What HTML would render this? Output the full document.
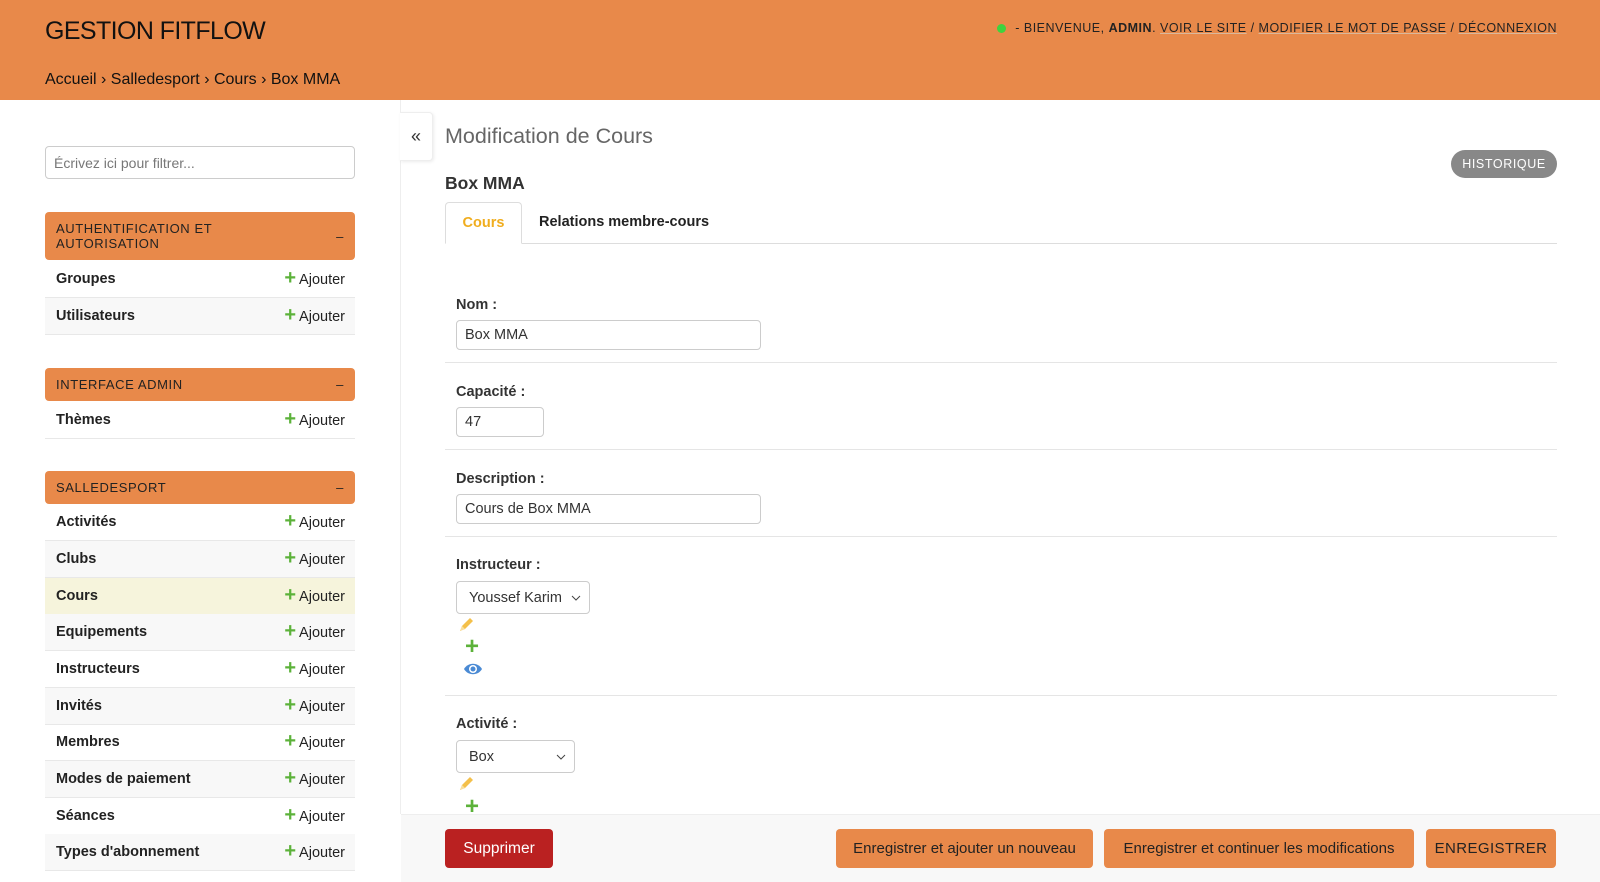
<!DOCTYPE html>
<html><head><meta charset="utf-8"><style>
*{box-sizing:border-box;margin:0;padding:0}
body{width:1600px;height:882px;overflow:hidden;background:#fff;font-family:"Liberation Sans",sans-serif;color:#333;position:relative;font-size:14.5px}
.a{position:absolute}
#hdr{left:0;top:0;width:1600px;height:100px;background:#e8894a}
.side-sec{position:absolute;left:45px;width:310px;background:#e8894a;border-radius:4px;color:#222;font-size:13px;letter-spacing:.6px;padding:0 11px;display:flex;align-items:center;justify-content:space-between}
.row{position:absolute;left:45px;width:310px;height:36.7px;border-bottom:1px solid #e8e8e8;display:flex;align-items:center;justify-content:space-between;padding:0 10px 0 11px;font-weight:bold;font-size:14.5px;color:#222}
.row span{font-weight:normal}
.row b{color:#5cb23a;font-size:20px;margin-right:3px;font-weight:900}
.g{background:#f8f8f8}
.lbl{position:absolute;left:456px;font-weight:bold;font-size:14.5px;color:#333}
.inp{position:absolute;left:456px;border:1px solid #ccc;border-radius:4px;height:30px;padding:0 8px;display:flex;align-items:center;font-size:14.5px;color:#333}
.sel{height:33px;padding-left:12px;justify-content:space-between;padding-right:8px}
.sep{position:absolute;left:445px;width:1112px;height:1px;background:#e5e5e5}
.btn{position:absolute;top:829px;height:39px;border-radius:4px;background:#e8894a;color:#222;font-size:15px;display:flex;align-items:center;justify-content:center}
.pl{position:absolute;left:465px;color:#5cb23a;font-size:24px;font-weight:900;line-height:20px}
</style></head><body>
<div id="hdr" class="a"></div>
<div class="a" style="left:45px;top:17px;font-size:25px;color:#111;letter-spacing:-.6px">GESTION FITFLOW</div>
<div class="a" style="right:43px;top:21px;font-size:12.5px;letter-spacing:.5px;color:#222;display:flex;align-items:center"><span style="display:inline-block;width:9px;height:9px;border-radius:50%;background:#3ed33e;margin-right:9px"></span>- BIENVENUE, <b style="margin:0 0 0 4px">ADMIN</b>.&nbsp;<u style="text-decoration-color:#d9b89c">VOIR LE SITE</u>&nbsp;/&nbsp;<u style="text-decoration-color:#d9b89c">MODIFIER LE MOT DE PASSE</u>&nbsp;/&nbsp;<u style="text-decoration-color:#d9b89c">DÉCONNEXION</u></div>
<div class="a" style="left:45px;top:71px;font-size:16px;color:#111">Accueil › Salledesport › Cours › Box MMA</div>

<div class="a" style="left:400px;top:100px;width:1px;height:714px;background:#eee"></div>
<div class="a" style="left:400px;top:112px;width:33px;height:49px;background:#fff;border:1px solid #eee;border-left:none;border-radius:0 4px 4px 0;box-shadow:1px 1px 3px rgba(0,0,0,.08);font-size:18px;display:flex;align-items:center;justify-content:center;color:#333">«</div>

<div class="a" style="left:45px;top:146px;width:310px;height:33px;border:1px solid #ccc;border-radius:4px;padding-left:8px;display:flex;align-items:center;color:#777;font-size:14px">Écrivez ici pour filtrer...</div>

<div class="side-sec" style="top:212px;height:48px"><div style="line-height:15px">AUTHENTIFICATION ET<br>AUTORISATION</div><div>–</div></div>
<div class="row" style="top:261px">Groupes<span><b>+</b>Ajouter</span></div>
<div class="row g" style="top:298px">Utilisateurs<span><b>+</b>Ajouter</span></div>

<div class="side-sec" style="top:368px;height:33px"><div>INTERFACE ADMIN</div><div>–</div></div>
<div class="row" style="top:402px">Thèmes<span><b>+</b>Ajouter</span></div>

<div class="side-sec" style="top:471px;height:33px"><div>SALLEDESPORT</div><div>–</div></div>
<div class="row" style="top:504px">Activités<span><b>+</b>Ajouter</span></div>
<div class="row g" style="top:541px">Clubs<span><b>+</b>Ajouter</span></div>
<div class="row" style="top:578px;background:#f6f4dc">Cours<span><b>+</b>Ajouter</span></div>
<div class="row g" style="top:614px">Equipements<span><b>+</b>Ajouter</span></div>
<div class="row" style="top:651px">Instructeurs<span><b>+</b>Ajouter</span></div>
<div class="row g" style="top:688px">Invités<span><b>+</b>Ajouter</span></div>
<div class="row" style="top:724px">Membres<span><b>+</b>Ajouter</span></div>
<div class="row g" style="top:761px">Modes de paiement<span><b>+</b>Ajouter</span></div>
<div class="row" style="top:798px">Séances<span><b>+</b>Ajouter</span></div>
<div class="row g" style="top:834px">Types d'abonnement<span><b>+</b>Ajouter</span></div>

<div class="a" style="left:445px;top:124px;font-size:21.5px;color:#666">Modification de Cours</div>
<div class="a" style="left:1451px;top:150px;width:106px;height:28px;border-radius:14px;background:#888;color:#fff;font-size:12.5px;letter-spacing:.6px;display:flex;align-items:center;justify-content:center">HISTORIQUE</div>
<div class="a" style="left:445px;top:173px;font-size:17.5px;font-weight:bold;color:#333">Box MMA</div>
<div class="a" style="left:445px;top:243px;width:1112px;height:1px;background:#ddd"></div>
<div class="a" style="left:445px;top:202px;width:77px;height:42px;border:1px solid #ddd;border-bottom:1px solid #fff;border-radius:4px 4px 0 0;background:#fff;color:#f0ad1e;font-weight:bold;font-size:14.5px;display:flex;align-items:center;justify-content:center">Cours</div>
<div class="a" style="left:539px;top:214px;font-weight:bold;font-size:14.5px;color:#222">Relations membre-cours</div>

<div class="lbl" style="top:297px">Nom :</div>
<div class="inp" style="top:320px;width:305px">Box MMA</div>
<div class="sep" style="top:362px"></div>
<div class="lbl" style="top:384px">Capacité :</div>
<div class="inp" style="top:407px;width:88px">47</div>
<div class="sep" style="top:449px"></div>
<div class="lbl" style="top:471px">Description :</div>
<div class="inp" style="top:494px;width:305px">Cours de Box MMA</div>
<div class="sep" style="top:536px"></div>
<div class="lbl" style="top:557px">Instructeur :</div>
<div class="inp sel" style="top:581px;width:134px">Youssef Karim <svg width="10" height="6"><path d="M1 1l4 4 4-4" stroke="#444" fill="none"/></svg></div>
<svg class="a" style="left:458px;top:616px" width="17" height="17"><path d="M2 15l2-5 8-8 3 3-8 8z" fill="#f4c04a"/><path d="M2 15l2-5 3 3z" fill="#f8dfa0"/></svg>
<div class="pl" style="top:637px">+</div>
<svg class="a" style="left:463px;top:662px" width="20" height="14"><path d="M1 7C5 0 15 0 19 7C15 14 5 14 1 7z" fill="#4a8ad4"/><circle cx="10" cy="7" r="4" fill="#fff"/><circle cx="10" cy="7" r="2.5" fill="#4a8ad4"/></svg>
<div class="sep" style="top:695px"></div>
<div class="lbl" style="top:716px">Activité :</div>
<div class="inp sel" style="top:740px;width:119px">Box <svg width="10" height="6"><path d="M1 1l4 4 4-4" stroke="#444" fill="none"/></svg></div>
<svg class="a" style="left:458px;top:775px" width="17" height="17"><path d="M2 15l2-5 8-8 3 3-8 8z" fill="#f4c04a"/><path d="M2 15l2-5 3 3z" fill="#f8dfa0"/></svg>
<div class="pl" style="top:797px">+</div>

<div class="a" style="left:401px;top:814px;width:1199px;height:68px;background:#f8f8f8;border-top:1px solid #eee"></div>
<div class="btn" style="left:445px;width:108px;background:#ba2121;color:#fff;font-size:15.5px">Supprimer</div>
<div class="btn" style="left:836px;width:257px">Enregistrer et ajouter un nouveau</div>
<div class="btn" style="left:1104px;width:310px">Enregistrer et continuer les modifications</div>
<div class="btn" style="left:1426px;width:130px;letter-spacing:.4px">ENREGISTRER</div>
</body></html>
